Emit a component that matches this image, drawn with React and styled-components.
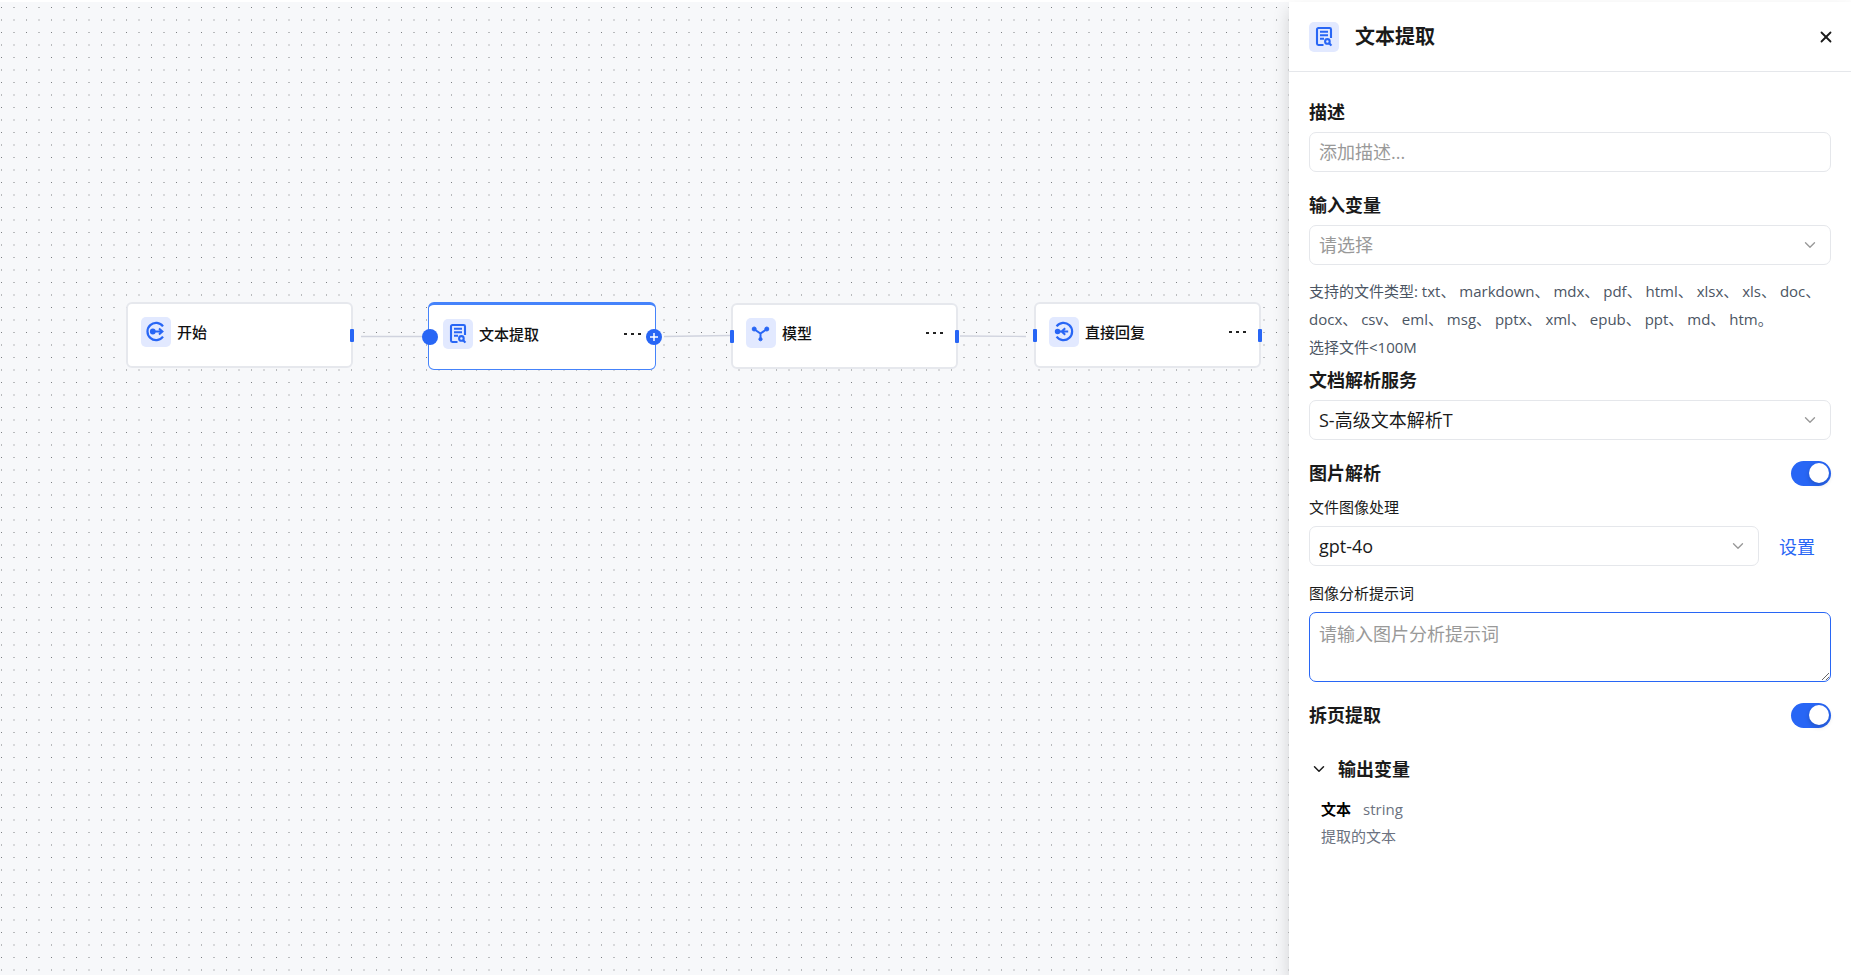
import React, { useState } from "react"
import styled, { createGlobalStyle } from "styled-components"
import { ChevronDown, X } from "lucide-react"

const BLUE = "#2866f5"

const GlobalStyle = createGlobalStyle`
  * {
    box-sizing: border-box;
  }

  body {
    margin: 0;
    color: #1a1a1a;
    background: #fff;
    font-family: "Open Sans", "Noto Sans CJK SC", sans-serif;
  }

  button,
  input,
  select,
  textarea {
    font-family: inherit;
  }
`

const Page = styled.div`
  display: flex;
  height: 100vh;
  overflow: hidden;
  padding-top: 2px;
`

// CANVAS
const Canvas = styled.main`
  position: relative;
  flex: 1;
  min-width: 0;
  background: #f7f8fa;
`

const Dots = styled.svg`
  position: absolute;
  inset: 0;
  width: 100%;
  height: 100%;
`

const Node = styled.article`
  position: absolute;
  left: ${p => p.$x}px;
  top: ${p => p.$y}px;
  width: 227px;
  display: flex;
  align-items: center;
  gap: 6px;
  padding: 13px 13px 19px;
  background: #fff;
  border: 2px solid #e6e8ed;
  border-radius: 6px;

  ${p =>
    p.$selected &&
    `
    width: 228px;
    padding: 14px 14px 20px;
    border-width: 3px 1px 1px;
    border-color: #4583fb;
  `}
`

const NodeTitle = styled.h3`
  flex: 1;
  margin: 0;
  font-size: 15px;
  line-height: 28px;
  font-weight: 500;
  color: #111;
`

const MoreButton = styled.button`
  display: flex;
  gap: 4px;
  padding: 4px 0;
  border: none;
  background: none;

  i {
    width: 3px;
    height: 2px;
    background: #222;
  }
`

const Port = styled.span`
  position: absolute;
  top: 25px;
  ${p => p.$side}: -3px;
  width: 4px;
  height: 13px;
  border-radius: 1px;
  background: ${BLUE};
`

const RoundPort = styled.button`
  position: absolute;
  top: 24px;
  ${p => p.$side}: -7px;
  width: 16px;
  height: 16px;
  padding: 0;
  border: none;
  border-radius: 50%;
  background: ${BLUE};

  svg {
    display: block;
  }
`

const IconBox = styled.span`
  flex: none;
  width: 30px;
  height: 30px;
  border-radius: 5px;
  background: #e2e9ff;

  svg {
    display: block;
  }
`

// PANEL
const Panel = styled.aside`
  position: relative;
  flex: 0 0 562px;
  background: #fff;
  box-shadow: 0 8px 16px rgba(0, 0, 0, 0.16);
`

const PanelHeader = styled.header`
  display: flex;
  align-items: center;
  gap: 16px;
  height: 70px;
  padding: 0 20px;
  border-bottom: 1px solid #e5e7eb;
`

const PanelTitle = styled.h2`
  flex: 1;
  margin: 0;
  font-size: 20px;
  line-height: 30px;
  font-weight: 700;
`

const CloseButton = styled.button`
  display: flex;
  padding: 0;
  margin-right: -4px;
  border: none;
  background: none;
  color: #1a1a1a;
`

const PanelBody = styled.div`
  display: flex;
  flex-direction: column;
  padding: 27px 20px;
`

const Field = styled.div`
  display: flex;
  flex-direction: column;
  margin-bottom: ${p => p.$space || 20}px;
`

const Label = styled.label`
  font-size: 18px;
  line-height: 26px;
  font-weight: 700;

  ${Field} & {
    margin-bottom: 7px;
  }
`

const SmallLabel = styled.label`
  margin-bottom: 8px;
  font-size: 15px;
  line-height: 22px;
`

const Input = styled.input`
  width: 100%;
  height: 40px;
  padding: 0 9px;
  font-size: 18px;
  border: 1px solid #e5e7eb;
  border-radius: 7px;
  outline: none;

  &::placeholder {
    color: #999;
  }
`

const SelectWrapper = styled.div`
  display: grid;
  flex: 1;
  align-items: center;

  > * {
    grid-area: 1 / 1;
  }

  svg {
    justify-self: end;
    margin-right: 12px;
    color: #999;
    pointer-events: none;
  }
`

const StyledSelect = styled.select`
  width: 100%;
  height: 40px;
  padding: 0 9px;
  font-size: 18px;
  color: ${p => (p.$empty ? "#999" : "#1a1a1a")};
  border: 1px solid #e5e7eb;
  border-radius: 7px;
  background: #fff;
  appearance: none;
  outline: none;
`

const Hint = styled.p`
  margin: 0 0 6px;
  font-size: 15px;
  line-height: 28px;
  color: #4b5563;
`

const Row = styled.div`
  display: flex;
  align-items: center;
  justify-content: space-between;
  margin-bottom: 10px;
`

const ModelRow = styled.div`
  display: flex;
  gap: 20px;
`

const SettingsButton = styled.button`
  padding: 0 16px 0 0;
  border: none;
  background: none;
  color: ${BLUE};
  font-size: 18px;
`

const TextArea = styled.textarea`
  width: 100%;
  height: 70px;
  padding: 9px;
  font-size: 18px;
  line-height: 24px;
  border: 1px solid ${BLUE};
  border-radius: 7px;
  outline: none;
  resize: vertical;

  &::placeholder {
    color: #999;
  }
`

const Toggle = styled.input`
  appearance: none;
  display: flex;
  align-items: center;
  width: 40px;
  height: 25px;
  margin: 0;
  padding: 0 2px;
  border-radius: 13px;
  background: #c4c8cf;

  &::before {
    content: "";
    width: 20px;
    height: 20px;
    border-radius: 50%;
    background: #fff;
    box-shadow: 0 2px 5px rgba(0, 0, 0, 0.2);
  }

  &:checked {
    justify-content: flex-end;
    background: ${BLUE};
  }
`

const OutputToggle = styled.button`
  display: flex;
  align-items: center;
  gap: 10px;
  margin-top: 18px;
  padding: 0 0 0 1px;
  border: none;
  background: none;
  color: #1a1a1a;
  font-size: 18px;
  line-height: 26px;
  font-weight: 700;
`

const Output = styled.div`
  margin: 14px 12px 0;
  font-size: 15px;
  line-height: 27px;
  color: #6b7280;

  strong {
    margin-right: 12px;
    font-weight: 700;
    color: #000;
  }

  p {
    margin: 0;
  }
`

const StartIcon = () => (
  <svg width="30" height="30" fill="none" stroke={BLUE} strokeWidth="2.2">
    <path d="M22 9.4a8.6 8.6 0 1 0 0 10.2" />
    <path d="M11 14.5h10.4M18 11.6l3.4 2.9-3.4 2.9" strokeWidth="2" />
    <circle cx="11.8" cy="14.5" r="1.8" fill={BLUE} />
  </svg>
)

const ReplyIcon = () => (
  <svg width="30" height="30" fill="none" stroke={BLUE} strokeWidth="2.2">
    <path d="M7.6 9.4a8.6 8.6 0 1 1 0 10.2" />
    <path d="M8 14.5h11.2M16.2 11.2l-3.6 3.3 3.6 3.3" strokeWidth="2" />
    <circle cx="8.6" cy="14.5" r="1.7" fill={BLUE} />
  </svg>
)

const DocIcon = () => (
  <svg width="30" height="30" fill="none" stroke={BLUE} strokeWidth="2.1">
    <path d="M14.5 23H9.4A1.4 1.4 0 0 1 8 21.6V7.4A1.4 1.4 0 0 1 9.4 6h11.2A1.4 1.4 0 0 1 22 7.4V16" />
    <path d="M11 9.7h8M11 13.2h8M11 16.8h4" strokeWidth="1.9" />
    <circle cx="18.4" cy="19.4" r="2.3" />
    <path d="m20.2 21.2 2.2 2.4" />
  </svg>
)

const ModelIcon = () => (
  <svg width="30" height="30" fill={BLUE} stroke={BLUE}>
    <path d="M8.2 11.2 14.5 15.6 20.6 11.2M14.5 15.6V21" fill="none" strokeWidth="2" />
    <circle cx="8.2" cy="11" r="2" />
    <circle cx="20.8" cy="11" r="2" />
    <circle cx="14.5" cy="21.2" r="1.6" />
  </svg>
)

const nodes = [
  { title: "开始", icon: <StartIcon />, x: 126, y: 300, ports: ["right"] },
  { title: "文本提取", icon: <DocIcon />, x: 428, y: 300, selected: true, more: true, ports: [] },
  { title: "模型", icon: <ModelIcon />, x: 731, y: 301, more: true, ports: ["left", "right"] },
  { title: "直接回复", icon: <ReplyIcon />, x: 1034, y: 300, more: true, ports: ["left", "right"] },
]

const FlowNode = ({ title, icon, x, y, selected, more, ports }) => (
  <Node $x={x} $y={y} $selected={selected}>
    <IconBox>{icon}</IconBox>
    <NodeTitle>{title}</NodeTitle>
    {more && (
      <MoreButton aria-label="更多">
        <i />
        <i />
        <i />
      </MoreButton>
    )}
    {ports.map(side => (
      <Port key={side} $side={side} />
    ))}
    {selected && (
      <>
        <RoundPort $side="left" aria-label="输入" />
        <RoundPort $side="right" aria-label="添加节点">
          <svg width="16" height="16" stroke="#fff" strokeWidth="1.5">
            <path d="M4 8h8M8 4v8" />
          </svg>
        </RoundPort>
      </>
    )}
  </Node>
)

const Select = ({ id, placeholder, options = [] }) => {
  const [value, setValue] = useState(placeholder ? "" : options[0])

  return (
    <SelectWrapper>
      <StyledSelect
        id={id}
        value={value}
        $empty={!value}
        onChange={e => setValue(e.target.value)}
      >
        {placeholder && <option value="">{placeholder}</option>}
        {options.map(option => (
          <option key={option}>{option}</option>
        ))}
      </StyledSelect>
      <ChevronDown size={18} strokeWidth={1.8} />
    </SelectWrapper>
  )
}

const App = () => {
  const [parseImages, setParseImages] = useState(true)
  const [splitPages, setSplitPages] = useState(true)
  const [open, setOpen] = useState(true)

  return (
    <Page>
      <GlobalStyle />
      <Canvas>
        <Dots>
          <pattern id="dots" width="25" height="25" patternUnits="userSpaceOnUse">
            <rect x="1" y="5" width="1" height="1" fill="#7c7f82" />
            <rect x="13" y="5" width="2" height="1" fill="#b9bbbd" />
            <rect x="1" y="17" width="1" height="2" fill="#b9bbbd" />
            <rect x="13" y="17" width="2" height="2" fill="#d8d9db" />
          </pattern>
          <rect width="100%" height="100%" fill="url(#dots)" />
          <path
            d="M361 334.5H424M664 334.5L730 333.5M960 334L1026 334.5"
            stroke="#d0d3de"
            strokeWidth="1.3"
          />
        </Dots>
        {nodes.map(node => (
          <FlowNode key={node.title} {...node} />
        ))}
      </Canvas>

      <Panel>
        <PanelHeader>
          <IconBox>
            <DocIcon />
          </IconBox>
          <PanelTitle>文本提取</PanelTitle>
          <CloseButton aria-label="关闭">
            <X size={18} strokeWidth={2.4} />
          </CloseButton>
        </PanelHeader>

        <PanelBody>
          <Field>
            <Label htmlFor="description">描述</Label>
            <Input id="description" placeholder="添加描述..." />
          </Field>

          <Field $space={12}>
            <Label htmlFor="variable">输入变量</Label>
            <Select id="variable" placeholder="请选择" />
          </Field>

          <Hint>
            支持的文件类型: txt、 markdown、 mdx、 pdf、 html、 xlsx、 xls、 doc、 docx、 csv、
            eml、 msg、 pptx、 xml、 epub、 ppt、 md、 htm。
            <br />
            选择文件&lt;100M
          </Hint>

          <Field>
            <Label htmlFor="service">文档解析服务</Label>
            <Select id="service" options={["S-高级文本解析T"]} />
          </Field>

          <Row>
            <Label htmlFor="parse-images">图片解析</Label>
            <Toggle
              id="parse-images"
              type="checkbox"
              role="switch"
              checked={parseImages}
              onChange={e => setParseImages(e.target.checked)}
            />
          </Row>

          <Field $space={16}>
            <SmallLabel htmlFor="model">文件图像处理</SmallLabel>
            <ModelRow>
              <Select id="model" options={["gpt-4o"]} />
              <SettingsButton>设置</SettingsButton>
            </ModelRow>
          </Field>

          <Field>
            <SmallLabel htmlFor="prompt">图像分析提示词</SmallLabel>
            <TextArea id="prompt" placeholder="请输入图片分析提示词" />
          </Field>

          <Row>
            <Label htmlFor="split-pages">拆页提取</Label>
            <Toggle
              id="split-pages"
              type="checkbox"
              role="switch"
              checked={splitPages}
              onChange={e => setSplitPages(e.target.checked)}
            />
          </Row>

          <OutputToggle aria-expanded={open} onClick={() => setOpen(!open)}>
            <ChevronDown size={18} strokeWidth={2} />
            输出变量
          </OutputToggle>
          {open && (
            <Output>
              <strong>文本</strong>
              string
              <p>提取的文本</p>
            </Output>
          )}
        </PanelBody>
      </Panel>
    </Page>
  )
}

export default App
